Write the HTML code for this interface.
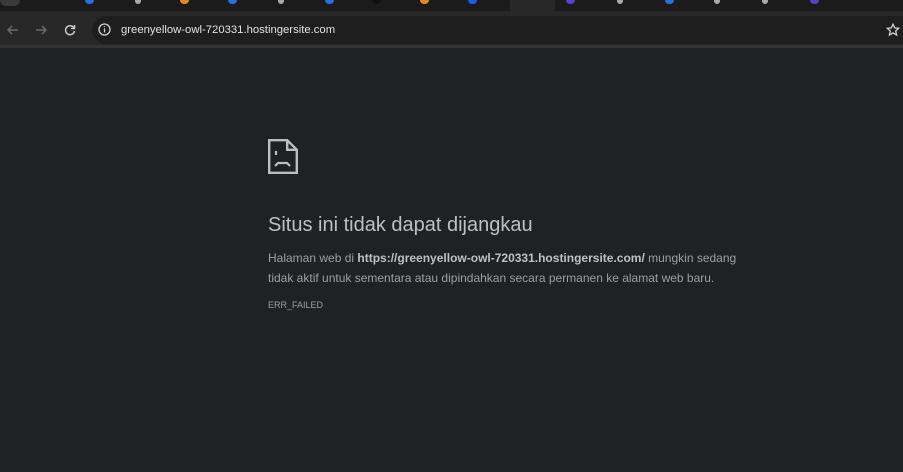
<!DOCTYPE html>
<html><head><style>
*{margin:0;padding:0;box-sizing:border-box}
body{width:903px;height:472px;overflow:hidden;background:#202124;font-family:"Liberation Sans","DejaVu Sans",sans-serif;position:relative}
.tabs{position:absolute;left:0;top:0;width:903px;height:11px;background:#1b1b1b}
.at{position:absolute;left:510px;top:0;width:45px;height:12px;background:#282828}
.tb{position:absolute;left:0;top:11px;width:903px;height:36px;background:#282828}
.om{position:absolute;left:92px;top:16px;width:830px;height:28px;border-radius:14px;background:#1e1e1e}
.url{position:absolute;left:121px;top:24px;font-size:11.3px;color:#e3e3e3}
.line{position:absolute;left:0;top:45px;width:903px;height:3px;background:#333}
.fav{position:absolute;top:0;height:4px;width:9px;border-radius:0 0 4px 4px}
h1{position:absolute;left:268px;top:214px;font-size:20px;font-weight:normal;color:#bdc1c6;font-family:"Liberation Sans",sans-serif}
.p{position:absolute;left:268px;top:248px;font-size:12px;line-height:20px;color:#9aa0a6;width:485px;font-family:"Liberation Sans",sans-serif}
.p b{color:#bdc1c6}
.e{position:absolute;left:268px;top:300px;font-size:9px;color:#9aa0a6}
</style></head><body>
<div class="tabs"></div>
<div class="at"></div>
<div style="position:absolute;left:0;top:0;width:20px;height:6px;border-radius:0 0 8px 8px;background:#3a3a3a"></div>
<div class="fav" style="left:85px;background:#2d6fe0"></div>
<div class="fav" style="left:135px;background:#aaa;width:6px"></div>
<div class="fav" style="left:180px;background:#e08a20"></div>
<div class="fav" style="left:228px;background:#2d6fe0"></div>
<div class="fav" style="left:278px;background:#aaa;width:6px"></div>
<div class="fav" style="left:325px;background:#2d6fe0"></div>
<div class="fav" style="left:372px;background:#111"></div>
<div class="fav" style="left:420px;background:#e08a20"></div>
<div class="fav" style="left:468px;background:#1a5cf0"></div>
<div class="fav" style="left:566px;background:#5a3fd0"></div>
<div class="fav" style="left:617px;background:#aaa;width:6px"></div>
<div class="fav" style="left:665px;background:#2d6fe0"></div>
<div class="fav" style="left:714px;background:#aaa;width:6px"></div>
<div class="fav" style="left:762px;background:#aaa;width:6px"></div>
<div class="fav" style="left:810px;background:#5a3fd0"></div>
<div class="tb"></div>
<div class="om"></div>
<svg style="position:absolute;left:6px;top:23px" width="14" height="14" viewBox="0 0 14 14" fill="none" stroke="#6b6b6b" stroke-width="1.5"><path d="M12 7H2M6 3L2 7l4 4"/></svg>
<svg style="position:absolute;left:34px;top:23px" width="14" height="14" viewBox="0 0 14 14" fill="none" stroke="#6b6b6b" stroke-width="1.5"><path d="M2 7h10M8 3l4 4-4 4"/></svg>
<svg style="position:absolute;left:63px;top:23px" width="14" height="14" viewBox="0 0 14 14" fill="none" stroke="#c8c8c8" stroke-width="1.5"><path d="M11 5A4.5 4.5 0 1 0 11.5 8"/><path d="M11.5 2v3.5H8" /></svg>
<svg style="position:absolute;left:98px;top:23px" width="13" height="13" viewBox="0 0 13 13" fill="none" stroke="#d0d0d0" stroke-width="1.3"><circle cx="6.5" cy="6.5" r="5.5"/><path d="M6.5 5.5v4M6.5 3.3v1"/></svg>
<div class="url">greenyellow-owl-720331.hostingersite.com</div>
<svg style="position:absolute;left:886px;top:23px" width="14" height="14" viewBox="0 0 14 14" fill="none" stroke="#d0d0d0" stroke-width="1.3"><path d="M7 1.2l1.7 3.7 4 .4-3 2.7.9 4-3.6-2.1-3.6 2.1.9-4-3-2.7 4-.4z"/></svg>
<div class="line"></div>
<svg style="position:absolute;left:268px;top:139px" width="30" height="35" viewBox="0 0 30 35" fill="none" stroke="#bdbdbd" stroke-width="2.4"><path d="M1.2 1.2h18l9.6 9.6v23H1.2z"/><path d="M19.2 1.2v9.6h9.6"/><path d="M8 12v4M7 27l3-3h9l3 3" stroke-width="2.2"/></svg>
<h1>Situs ini tidak dapat dijangkau</h1>
<div class="p">Halaman web di <b>https://greenyellow-owl-720331.hostingersite.com/</b> mungkin sedang<br>tidak aktif untuk sementara atau dipindahkan secara permanen ke alamat web baru.</div>
<div class="e">ERR_FAILED</div>
</body></html>
